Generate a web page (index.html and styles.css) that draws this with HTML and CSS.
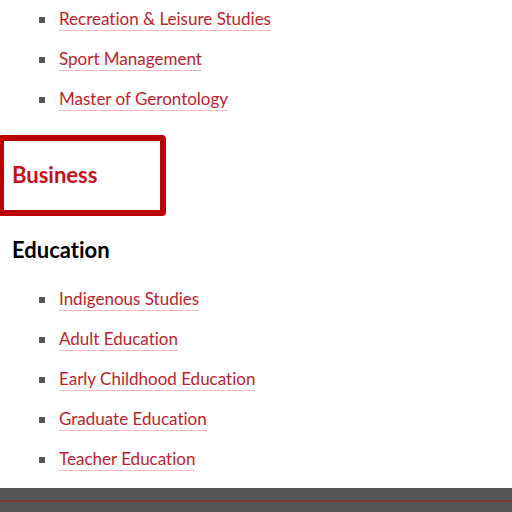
FILE: index.html
```html
<!DOCTYPE html>
<html lang="en">
<head>
<meta charset="utf-8">
<title>Programs</title>
<link rel="stylesheet" href="styles.css">
</head>
<body>
<main class="content">
  <ul class="programs">
    <li><a href="#recreation">Recreation &amp; Leisure Studies</a></li>
    <li><a href="#sport">Sport Management</a></li>
    <li><a href="#gerontology">Master of Gerontology</a></li>
  </ul>
  <h2 class="faculty highlighted"><a href="#business">Business</a></h2>
  <h2 class="faculty">Education</h2>
  <ul class="programs">
    <li><a href="#indigenous">Indigenous Studies</a></li>
    <li><a href="#adult">Adult Education</a></li>
    <li><a href="#early">Early Childhood Education</a></li>
    <li><a href="#graduate">Graduate Education</a></li>
    <li><a href="#teacher">Teacher Education</a></li>
  </ul>
</main>
<footer class="footer"></footer>
</body>
</html>
```
FILE: styles.css
```css
* {
  box-sizing: border-box;
}

body {
  margin: 0;
  min-height: 100vh;
  display: flex;
  flex-direction: column;
  overflow-x: hidden;
  background: #fff;
  color: #000;
  font-family: Lato, "Liberation Sans", sans-serif;
  font-variant-ligatures: none;
}

.content {
  padding: 8px 12px 17px;
}

.programs {
  display: grid;
  gap: 17px;
  margin: 0;
  padding: 0 0 0 27px;
  list-style: none;
}

.programs li {
  display: flex;
  align-items: center;
  gap: 14px;
}

.programs li::before {
  content: "";
  width: 6px;
  height: 6px;
  background: #555;
}

.programs a {
  border-bottom: 1px solid #f2babd;
  color: #bd1e2c;
  font-size: 17px;
  line-height: 22px;
  text-decoration: none;
}

.faculty {
  margin: 19px 0 23px;
  font-size: 22px;
  font-weight: 700;
  line-height: 30px;
}

.faculty a {
  color: #c4111c;
  text-decoration: none;
}

.highlighted {
  width: 168px;
  margin: 24px 0 19px -14px;
  padding: 19px 8px 20px;
  border: 6px solid #b90005;
  border-radius: 4px;
}

.footer {
  flex: 1;
  padding-top: 12px;
  background: #555;
}

.footer::before {
  content: "";
  display: block;
  height: 2px;
  background: #7c3737;
}
```
